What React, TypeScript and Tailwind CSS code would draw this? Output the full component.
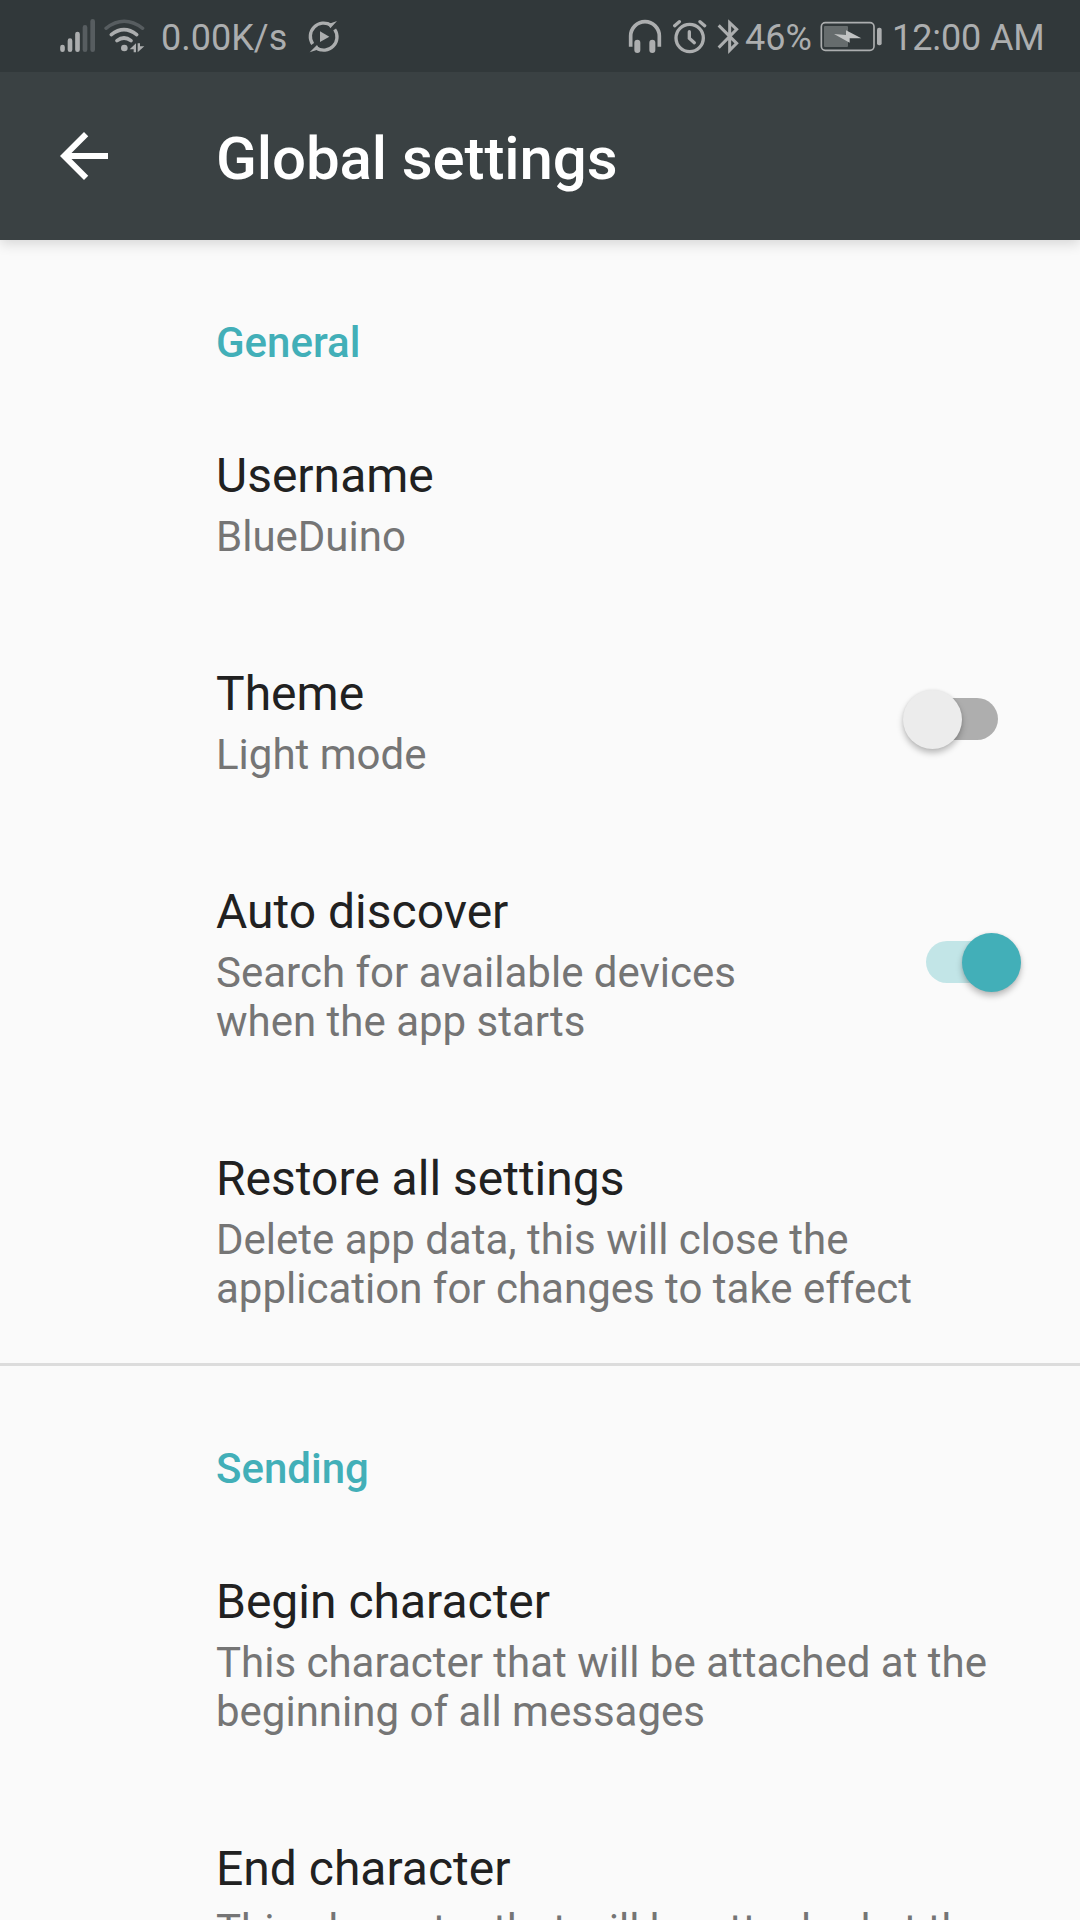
import React from "react";

function Row({ title, lines, className = "", children }: { title: string; lines: string[]; className?: string; children?: React.ReactNode }) {
  return (
    <div className={`flex shrink-0 items-start pl-[216px] ${className}`}>
      <div className="flex-1 whitespace-nowrap">
        <div className="h-[68px] text-[48px] leading-[64px] text-[#212121]">{title}</div>
        {lines.map((l) => (
          <div key={l} className="h-[49px] text-[42px] leading-[49px] text-[#757575]">{l}</div>
        ))}
      </div>
      {children}
    </div>
  );
}

function Section({ children }: { children: React.ReactNode }) {
  return (
    <h2 className="mt-[78px] h-[49px] shrink-0 pl-[216px] text-[42px] leading-[49px] font-medium text-[#42afb8]">{children}</h2>
  );
}

function Switch({ on, className }: { on: boolean; className: string }) {
  return (
    <div role="switch" aria-checked={on} className={`relative mr-[58px] h-[60px] w-[120px] ${className}`}>
      <div className={`absolute top-[9px] left-[24px] h-[42px] w-[72px] rounded-full ${on ? "bg-[#c2e5e7]" : "bg-[#aeaeae]"}`} />
      <div
        className={`absolute top-px size-[59px] rounded-full shadow-[0_4px_6px_rgba(0,0,0,0.25),0_0_3px_rgba(0,0,0,0.08)] ${on ? "left-[60px] bg-[#42afb8]" : "left-px bg-[#ececec]"}`}
      />
    </div>
  );
}

const ink = "#acaeaf";
const dim = "#575d60";

function StatusBar() {
  return (
    <div className="flex h-[72px] shrink-0 items-start bg-[#31383a] pt-[18px] text-[36px] leading-[42px] whitespace-nowrap text-[#acaeaf]">
      <svg className="ml-[60px] h-[37px] w-[36px] shrink-0" viewBox="60 54 108 111" strokeWidth="14" strokeLinecap="round">
        <path d="M67.5 141v8M90 122v27M112.500 102v47" stroke={ink} />
        <path d="M135 82v67M158 64v85" stroke={dim} />
      </svg>
      <svg className="ml-[8px] h-[37px] w-[41px] shrink-0" viewBox="192 54 123 111" fill="none" strokeLinecap="round">
        <path d="M198 85Q252 43 308 85" stroke={dim} strokeWidth="10" />
        <path d="M214 104Q252 74 290 104M231 122Q252 106 273 122" stroke={ink} strokeWidth="11" />
        <circle cx="253" cy="144" r="10" fill={ink} />
        <path d="M288 130v27h-7v-9h-12zM293 130h7v9h13l-20 18z" fill={ink} />
      </svg>
      <span className="-mt-px ml-[16px] w-[127px]">0.00K/s</span>
      <svg className="ml-[20px] h-[37px] w-[32px] shrink-0" viewBox="804 54 96 111" fill="none">
        <path d="M818 132A40 40 0 0 1 873 76M884 88A40 40 0 0 1 829 144" stroke={ink} strokeWidth="10" />
        <path d="M860 66L872 70L891 63L871 85zM842 154L830 150L809 157L831 135z" fill={ink} />
        <path d="M840 94L868 110L840 126z" fill={ink} />
      </svg>
      <svg className="ml-[288px] h-[37px] w-[34px] shrink-0" viewBox="54 54 102 111" fill="none" stroke={ink}>
        <path d="M62 140V108A43 43 0 0 1 148 108V140" strokeWidth="11" />
        <path d="M82 128v22M127 128v22" strokeWidth="18" strokeLinecap="round" />
      </svg>
      <svg className="ml-[10px] h-[37px] w-[35px] shrink-0" viewBox="186 54 105 111" fill="none" stroke={ink} strokeLinecap="round">
        <circle cx="239" cy="114" r="41" strokeWidth="10" />
        <path d="M238 95v20l15 13" strokeWidth="10" />
        <path d="M194 77l14-12M270 65l14 12" strokeWidth="10" />
      </svg>
      <svg className="ml-[10px] h-[37px] w-[23px] shrink-0" viewBox="321 54 69 111" fill="none" stroke={ink} strokeWidth="9">
        <path d="M326 76L380 130L359 151V68L380 88L326 143" />
      </svg>
      <span className="-mt-px ml-[5px] w-[70px]">46%</span>
      <svg className="ml-[5px] h-[37px] w-[62px] shrink-0" viewBox="60 54 186 111" fill="none">
        <rect x="64" y="68" width="158" height="83" rx="12" stroke={ink} strokeWidth="5" />
        <rect x="72" y="78" width="72" height="63" rx="3" fill="#666c6d" />
        <rect x="231" y="83" width="14" height="53" rx="6" fill={ink} />
        <path d="M102 102L138 105V91L184 115L149 115V128z" fill="#c1c3c3" />
      </svg>
      <span className="-mt-px ml-[10px] tracking-[-0.1px]">12:00 AM</span>
    </div>
  );
}

export default function App() {
  return (
    <div className="flex h-[1920px] w-[1080px] flex-col overflow-hidden bg-[#fafafa] font-['Roboto',sans-serif]">
      <header className="shrink-0 bg-[#3a4143] shadow-[0_4px_12px_rgba(0,0,0,0.14)]">
        <StatusBar />
        <div className="flex h-[168px] items-start">
          <svg className="mt-[48px] ml-[48px] size-[72px]" viewBox="0 0 24 24" fill="#fff">
            <path d="M20 11H7.830l5.590-5.590L12 4l-8 8 8 8 1.410-1.410L7.830 13H20v-2z" />
          </svg>
          <h1 className="mt-[42px] ml-[96px] text-[60px] leading-[90px] font-medium tracking-[-0.1px] text-white">Global settings</h1>
        </div>
      </header>
      <Section>General</Section>
      <Row className="mt-[77px]" title="Username" lines={["BlueDuino"]} />
      <Row className="mt-[101px]" title="Theme" lines={["Light mode"]}>
        <Switch on={false} className="mt-[27px]" />
      </Row>
      <Row className="mt-[101px]" title="Auto discover" lines={["Search for available devices", "when the app starts"]}>
        <Switch on className="mt-[52px]" />
      </Row>
      <Row className="mt-[101px]" title="Restore all settings" lines={["Delete app data, this will close the", "application for changes to take effect"]} />
      <div className="mt-[50px] h-[3px] shrink-0 bg-[#dcdcdc]" />
      <Section>Sending</Section>
      <Row className="mt-[77px]" title="Begin character" lines={["This character that will be attached at the", "beginning of all messages"]} />
      <Row className="mt-[101px]" title="End character" lines={["This character that will be attached at the"]} />
    </div>
  );
}
